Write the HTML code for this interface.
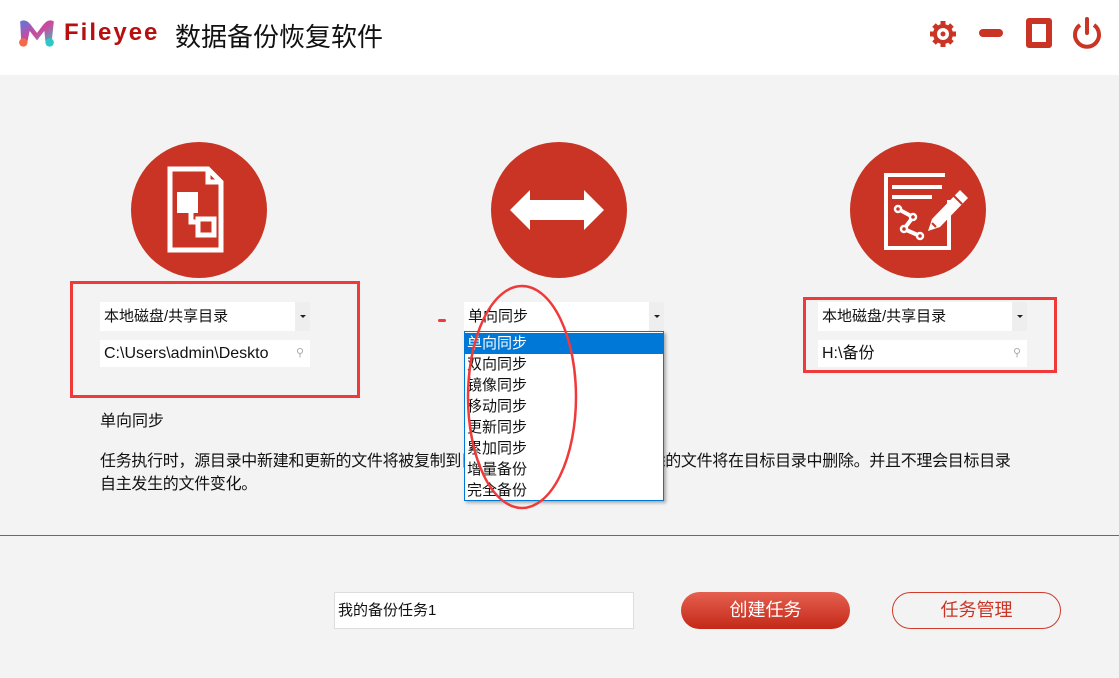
<!DOCTYPE html>
<html><head><meta charset="utf-8"><style>
*{margin:0;padding:0;box-sizing:border-box}
body{width:1119px;height:678px;background:#f3f3f3;font-family:"Liberation Sans","Noto Sans CJK SC",sans-serif;position:relative;overflow:hidden;color:#111}
.abs{position:absolute}
.hdr{left:0;top:0;width:1119px;height:75px;background:#fff}
.circ{width:136px;height:136px;border-radius:50%;background:#c93424}
.sel{background:#fff;height:29px;font-size:15px;line-height:29px;padding-left:4px}
.sel .ar{position:absolute;right:0;top:0;width:16px;height:29px;background:#eee;border-left:1px solid #fff}
.sel .ar:after{content:"";position:absolute;left:5px;top:13px;border-left:3px solid transparent;border-right:3px solid transparent;border-top:3px solid #222}
.inp{background:#fff;height:27px;font-size:16px;line-height:27px;padding-left:4px}
.box{border:3px solid #f03a3a}
.dd{left:464px;top:331px;width:200px;height:170px;background:#fff;border:1px solid #0078d7;box-shadow:2px 2px 3px rgba(0,0,0,.3);font-size:15px}
.dd div{height:21px;line-height:21px;padding-left:2px}
</style></head><body>
<div class="abs hdr"></div>
<svg class="abs" style="left:17px;top:18px" width="40" height="30" viewBox="0 0 38 28">
<defs><linearGradient id="g" x1="0" y1="0" x2="1" y2="1"><stop offset="0" stop-color="#5a7be0"/><stop offset=".5" stop-color="#d2459a"/><stop offset="1" stop-color="#2fc6c6"/></linearGradient></defs>
<path d="M3 3 Q8 0 13 6 L19 14 L25 6 Q30 0 35 3 L33 22 Q31 27 27 22 L26 12 L19 21 L12 12 L10 22 Q7 27 4 22 Z" fill="url(#g)"/>
<circle cx="6" cy="23" r="4" fill="#f56a4a"/><circle cx="31" cy="23" r="4" fill="#2fc6c6"/></svg>
<div class="abs" style="left:64px;top:19px;font-size:24px;font-weight:bold;color:#b70f0f;letter-spacing:2px">Fileyee</div>
<div class="abs" style="left:175px;top:17px;font-size:26px;color:#111">数据备份恢复软件</div>
<svg class="abs" style="left:926px;top:18px" width="34" height="32" viewBox="0 0 34 32"><g fill="#c93424"><circle cx="17" cy="16" r="10"/><g stroke="#c93424" stroke-width="5"><line x1="17" y1="3" x2="17" y2="29"/><line x1="4" y1="16" x2="30" y2="16"/><line x1="8" y1="7" x2="26" y2="25"/><line x1="26" y1="7" x2="8" y2="25"/></g></g><circle cx="17" cy="16" r="6" fill="#fff"/><circle cx="17" cy="16" r="2.5" fill="#c93424"/></svg>
<div class="abs" style="left:979px;top:29px;width:24px;height:8px;background:#c93424;border-radius:4px"></div>
<div class="abs" style="left:1026px;top:18px;width:26px;height:30px;border:6px solid #c93424;border-radius:3px"></div>
<svg class="abs" style="left:1071px;top:16px" width="32" height="34" viewBox="0 0 32 34"><path d="M9 9 A12 12 0 1 0 23 9" fill="none" stroke="#c93424" stroke-width="4"/><line x1="16" y1="3" x2="16" y2="17" stroke="#c93424" stroke-width="4" stroke-linecap="round"/></svg>

<div class="abs circ" style="left:131px;top:142px"></div>
<svg class="abs" style="left:131px;top:142px" width="136" height="136" viewBox="0 0 136 136"><g fill="none" stroke="#fff" stroke-width="5"><path d="M39 27 H77 L90 40 V108 H39 Z"/><path d="M77 27 V40 H90" stroke-width="5"/><rect x="67" y="77" width="16" height="16"/><path d="M60 60 V80 H67" stroke-width="5"/></g><rect x="46" y="50" width="21" height="21" fill="#fff"/></svg>
<div class="abs circ" style="left:491px;top:142px"></div>
<svg class="abs" style="left:491px;top:142px" width="136" height="136" viewBox="0 0 136 136"><path d="M19 68 L39 48 V58 H93 V48 L113 68 L93 88 V78 H39 V88 Z" fill="#fff"/></svg>
<div class="abs circ" style="left:850px;top:142px"></div>
<svg class="abs" style="left:850px;top:142px" width="136" height="136" viewBox="0 0 136 136"><g fill="none" stroke="#fff" stroke-width="4"><path d="M95 33 H36 V106 H99 V58"/><line x1="42" y1="45" x2="92" y2="45"/><line x1="42" y1="55" x2="82" y2="55"/><path d="M48 67 L63 75 L54 87 L70 94"/></g><g fill="#c93424" stroke="#fff" stroke-width="2.5"><circle cx="48" cy="67" r="3"/><circle cx="63" cy="75" r="3"/><circle cx="54" cy="87" r="3"/><circle cx="70" cy="94" r="3"/></g><path d="M78 89 L82 77 L110 48 L118 56 L90 85 Z" fill="#fff"/><line x1="104" y1="54" x2="112" y2="62" stroke="#c93424" stroke-width="2"/><line x1="82" y1="81" x2="86" y2="85" stroke="#c93424" stroke-width="2"/></svg>

<div class="abs box" style="left:70px;top:281px;width:290px;height:117px"></div>
<div class="abs sel" style="left:100px;top:302px;width:210px">本地磁盘/共享目录<span class="ar"></span></div>
<div class="abs inp" style="left:100px;top:340px;width:210px">C:\Users\admin\Deskto<span style="position:absolute;right:6px;color:#aaa;font-size:11px">&#9906;</span></div>

<div class="abs box" style="left:803px;top:297px;width:254px;height:76px"></div>
<div class="abs sel" style="left:818px;top:302px;width:209px">本地磁盘/共享目录<span class="ar"></span></div>
<div class="abs inp" style="left:818px;top:340px;width:209px">H:\备份<span style="position:absolute;right:6px;color:#aaa;font-size:11px">&#9906;</span></div>

<div class="abs sel" style="left:464px;top:302px;width:200px">单向同步<span class="ar"></span></div>
<div class="abs" style="left:438px;top:319px;width:8px;height:3px;background:#f03a3a;border-radius:2px"></div>

<div class="abs" style="left:100px;top:407px;font-size:16px">单向同步</div>
<div class="abs" style="left:100px;top:450px;font-size:16px;letter-spacing:-0.3px;line-height:23px;width:950px">任务执行时，源目录中新建和更新的文件将被复制到目标目录中，源目录中被删除的文件将在目标目录中删除。并且不理会目标目录<br>自主发生的文件变化。</div>

<div class="abs dd"><div style="background:#0078d7;color:#fff;margin-top:1px">单向同步</div><div>双向同步</div><div>镜像同步</div><div>移动同步</div><div>更新同步</div><div>累加同步</div><div>增量备份</div><div>完全备份</div></div>
<svg class="abs" style="left:460px;top:282px" width="124" height="230"><ellipse cx="62" cy="115" rx="54" ry="111" fill="none" stroke="#f03a3a" stroke-width="2.5"/></svg>

<div class="abs" style="left:0;top:535px;width:1119px;height:1px;background:#e03a2a"></div>
<div class="abs" style="left:334px;top:592px;width:300px;height:37px;background:#fff;border:1px solid #ddd;font-size:15px;line-height:35px;padding-left:3px">我的备份任务1</div>
<div class="abs" style="left:681px;top:592px;width:169px;height:37px;border-radius:19px;background:linear-gradient(#e56050,#c42818);color:#fff;font-size:18px;line-height:37px;text-align:center">创建任务</div>
<div class="abs" style="left:892px;top:592px;width:169px;height:37px;border-radius:19px;border:1px solid #d23a2a;color:#c93424;font-size:18px;line-height:35px;text-align:center">任务管理</div>
</body></html>
